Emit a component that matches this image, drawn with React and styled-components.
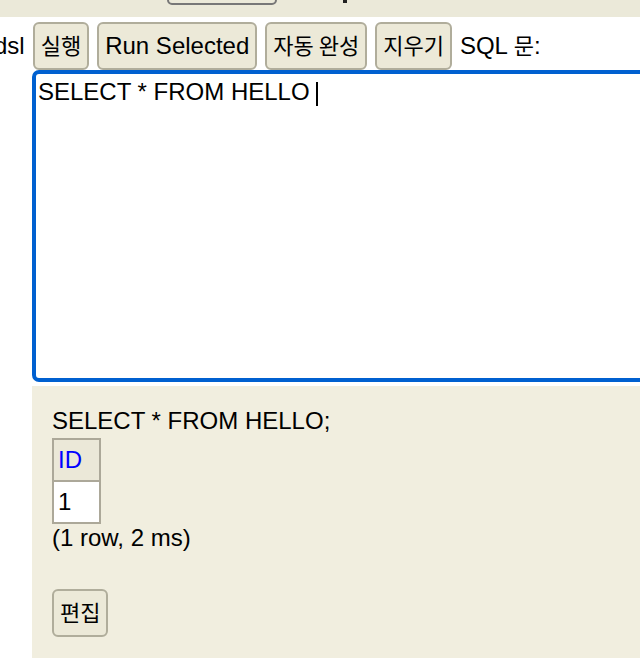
import React from 'react';
import styled, { createGlobalStyle } from 'styled-components';

const GlobalStyle = createGlobalStyle`
  html, body {
    margin: 0;
    background: #fff;
  }
  body {
    font-family: "Liberation Sans", "Noto Sans CJK KR", Arial, sans-serif;
    font-size: 24px;
    color: #000;
  }
`;

const Page = styled.div`
  width: 640px;
  height: 658px;
  overflow: hidden;
`;

// toolbar cut off at the top of the window
const TopBar = styled.div`
  height: 17px;
  background: #ebe9d9;
  overflow: hidden;
  display: flex;
  align-items: flex-start;
  padding-left: 167px;
`;

const CutSelect = styled.div`
  width: 106px;
  height: 20px;
  margin-top: -19px;
  border: 2px solid #777;
  border-radius: 5px;
`;

const CutDot = styled.div`
  width: 4px;
  height: 3px;
  margin-left: 66px;
  background: #222;
`;

const ButtonRow = styled.div`
  display: flex;
  align-items: center;
  gap: 8px;
  height: 48px;
  padding-top: 5px;
  white-space: nowrap;
`;

const Clipped = styled.span`
  margin-left: -6px;
`;

const Ko = styled.span`
  font-family: "Noto Sans CJK KR", sans-serif;
  font-size: 22px;
  line-height: 1;
  white-space: pre;
`;

const Button = styled.button`
  font-family: inherit;
  font-size: 24px;
  line-height: 28px;
  height: 48px;
  color: #000;
  background: #ece9d8;
  border: 2px solid #b0ad9b;
  border-radius: 6px;
  padding: 0 6px;
  margin: 0;
  cursor: pointer;
  white-space: nowrap;
`;

const Label = styled.span`
  line-height: 28px;
`;

const Editor = styled.div`
  margin-left: 32px;
  width: 640px;
  height: 296px;
  border: 4px solid #0060d0;
  border-radius: 7px;
  padding: 4px 2px;
  box-sizing: content-box;
  background: #fff;
  white-space: pre;
`;

const Caret = styled.span`
  display: inline-block;
  width: 2px;
  height: 24px;
  background: #000;
  vertical-align: -6px;
`;

const ResultPanel = styled.div`
  margin: 4px 0 0 32px;
  height: 400px;
  background: #f1eedf;
  padding: 21px 20px;
`;

const ResultTable = styled.table`
  border-collapse: collapse;
  margin-top: 3px;
`;

const Cell = styled.td`
  border: 2px solid #aca899;
  padding: 6px 4px;
  width: 37px;
  line-height: 28px;
  font-size: 24px;
  background: ${p => (p.$head ? '#ebe8d8' : '#fff')};
  color: ${p => (p.$head ? '#0000ff' : '#000')};
`;

const EditButton = styled(Button)`
  margin-top: 37px;
`;

const App = () => {
  return (
    <Page>
      <GlobalStyle />
      <TopBar>
        <CutSelect />
        <CutDot />
      </TopBar>
      <ButtonRow>
        <Clipped>dsl</Clipped>
        <Button><Ko>실행</Ko></Button>
        <Button>Run Selected</Button>
        <Button><Ko>자동 완성</Ko></Button>
        <Button><Ko>지우기</Ko></Button>
        <Label>SQL <Ko>문</Ko>:</Label>
      </ButtonRow>
      <Editor>
        SELECT * FROM HELLO <Caret />
      </Editor>
      <ResultPanel>
        <div>SELECT * FROM HELLO;</div>
        <ResultTable>
          <tbody>
            <tr><Cell $head>ID</Cell></tr>
            <tr><Cell>1</Cell></tr>
          </tbody>
        </ResultTable>
        <div>(1 row, 2 ms)</div>
        <EditButton><Ko>편집</Ko></EditButton>
      </ResultPanel>
    </Page>
  );
};

export default App;
